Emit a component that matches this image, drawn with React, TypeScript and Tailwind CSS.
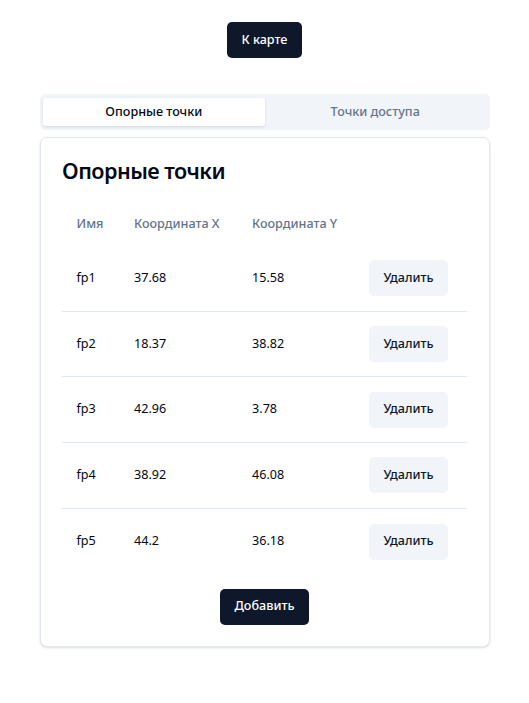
import React from "react";

const rows = [
  { name: "fp1", x: "37.68", y: "15.58" },
  { name: "fp2", x: "18.37", y: "38.82" },
  { name: "fp3", x: "42.96", y: "3.78" },
  { name: "fp4", x: "38.92", y: "46.08" },
  { name: "fp5", x: "44.2", y: "36.18" },
];

export default function App() {
  return (
    <div
      className="min-h-[703px] bg-white text-[#020817]"
      style={{ fontFamily: '"Noto Sans", "Open Sans", sans-serif' }}
    >
      <div className="mx-auto w-[450px] pt-[22px]">
        <div className="flex justify-center">
          <button className="h-9 rounded-[5px] bg-[#0f172a] px-[14.4px] text-[12.6px] font-medium leading-[18px] text-white">
            К карте
          </button>
        </div>

        <div className="mt-9 flex h-9 items-center rounded-[5px] bg-[#f1f5f9] p-[3.6px]">
          <div className="flex h-[28.8px] flex-1 items-center justify-center rounded-[2.7px] bg-white text-[12.6px] font-medium text-[#020817] shadow-sm">
            Опорные точки
          </div>
          <div className="flex h-[28.8px] flex-1 items-center justify-center text-[12.6px] font-medium text-[#64748b]">
            Точки доступа
          </div>
        </div>

        <div className="mt-[7px] rounded-[7px] border border-[#e2e8f0] bg-white px-[21.6px] pb-[21.6px] pt-[21.6px] shadow-sm">
          <h2 className="text-[21.6px] font-semibold leading-none tracking-tight">Опорные точки</h2>

          <div className="mt-[21.6px]">
            <div className="grid h-[43.2px] grid-cols-[57.6px_118px_117px_1fr] items-center whitespace-nowrap text-[12.6px] font-medium text-[#64748b]">
              <div className="px-[14.4px]">Имя</div>
              <div className="px-[14.4px]">Координата X</div>
              <div className="px-[14.4px]">Координата Y</div>
              <div className="px-[14.4px]"></div>
            </div>
            {rows.map((r, i) => (
              <div
                key={r.name}
                className={
                  "grid h-[65.7px] grid-cols-[57.6px_118px_117px_1fr] items-center text-[12.6px] " +
                  (i < rows.length - 1 ? "border-b border-[#e2e8f0]" : "")
                }
              >
                <div className="px-[14.4px]">{r.name}</div>
                <div className="px-[14.4px]">{r.x}</div>
                <div className="px-[14.4px]">{r.y}</div>
                <div className="px-[14.4px]">
                  <button className="h-9 whitespace-nowrap rounded-[5px] bg-[#f1f5f9] px-[14.4px] text-[12.6px] font-medium text-[#0f172a]">
                    Удалить
                  </button>
                </div>
              </div>
            ))}
          </div>

          <div className="mt-[14.4px] flex justify-center">
            <button className="h-9 rounded-[5px] bg-[#0f172a] px-[14.4px] text-[12.6px] font-medium text-white">
              Добавить
            </button>
          </div>
        </div>
      </div>
    </div>
  );
}
